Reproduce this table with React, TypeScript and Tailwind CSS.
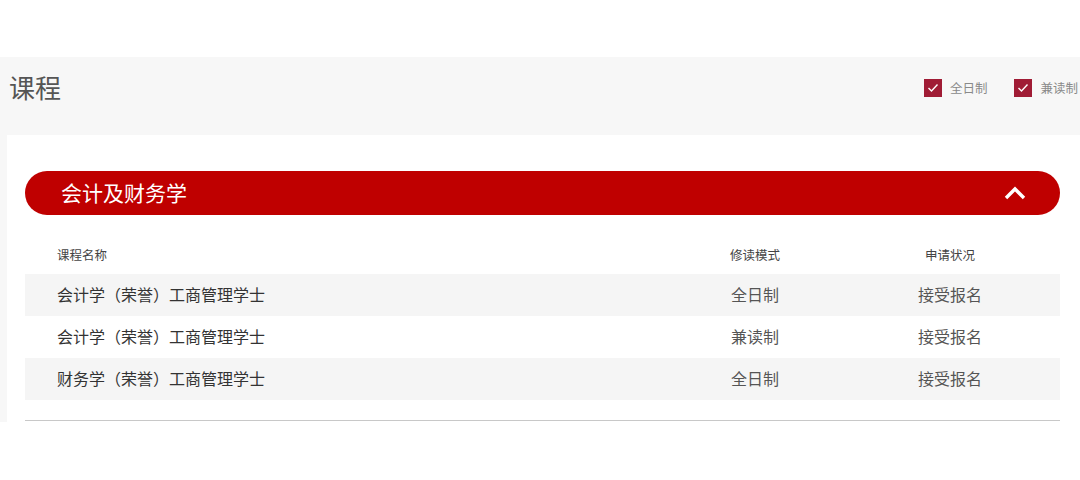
import React from "react";

const font = { fontFamily: '"Noto Sans CJK SC", "Noto Sans", sans-serif' };

function Check({ label }: { label: string }) {
  return (
    <div className="flex items-center gap-2">
      <span className="flex h-[18px] w-[18px] items-center justify-center bg-[#a01c35]">
        <svg width="12" height="10" viewBox="0 0 12 10" fill="none">
          <path d="M1.5 5 L4.5 8 L10.5 1.5" stroke="white" strokeWidth="1.4" />
        </svg>
      </span>
      <span className="text-[12.5px] text-[#8a8a8a]">{label}</span>
    </div>
  );
}

const rows = [
  { name: "会计学（荣誉）工商管理学士", mode: "全日制", status: "接受报名" },
  { name: "会计学（荣誉）工商管理学士", mode: "兼读制", status: "接受报名" },
  { name: "财务学（荣誉）工商管理学士", mode: "全日制", status: "接受报名" },
];

export default function App() {
  return (
    <div className="h-[480px] w-[1080px] bg-white" style={font}>
      <div className="h-[57px]" />
      <div className="bg-[#f7f7f7]">
        <div className="flex h-[78px] items-start justify-between pl-[9px] pr-[2px] pt-[15px]">
          <h1 className="text-[26px] leading-[30px] text-[#555]">课程</h1>
          <div className="flex items-center gap-[27px] pt-[7px]">
            <Check label="全日制" />
            <Check label="兼读制" />
          </div>
        </div>
        <div className="ml-[7px] bg-white pt-[36px] pl-[18px] pr-[20px] h-[287px]">
          <div className="flex h-[44px] items-center justify-between rounded-full bg-[#bf0000] pl-[36px] pr-[34px]">
            <span className="text-[21px] text-white">会计及财务学</span>
            <svg width="22" height="14" viewBox="0 0 22 14" fill="none">
              <path d="M2 12 L11 3 L20 12" stroke="white" strokeWidth="3.4" />
            </svg>
          </div>
          <div className="mt-[31px] grid h-[28px] grid-cols-[1fr_150px_180px] gap-x-[30px] pl-[32px] pr-[20px] text-[12.5px] text-[#444]">
            <span>课程名称</span>
            <span className="text-center">修读模式</span>
            <span className="text-center">申请状况</span>
          </div>
          {rows.map((r, i) => (
            <div
              key={i}
              className={`grid h-[42px] grid-cols-[1fr_150px_180px] items-center gap-x-[30px] pl-[32px] pr-[20px] pb-[2px] text-[16px] text-[#333] ${
                i % 2 === 0 ? "bg-[#f5f5f5]" : "bg-white"
              }`}
            >
              <span>{r.name}</span>
              <span className="text-center text-[#555]">{r.mode}</span>
              <span className="text-center text-[#555]">{r.status}</span>
            </div>
          ))}
          <div className="mt-[20px] h-px bg-[#c8c8c8]" />
        </div>
      </div>
    </div>
  );
}
